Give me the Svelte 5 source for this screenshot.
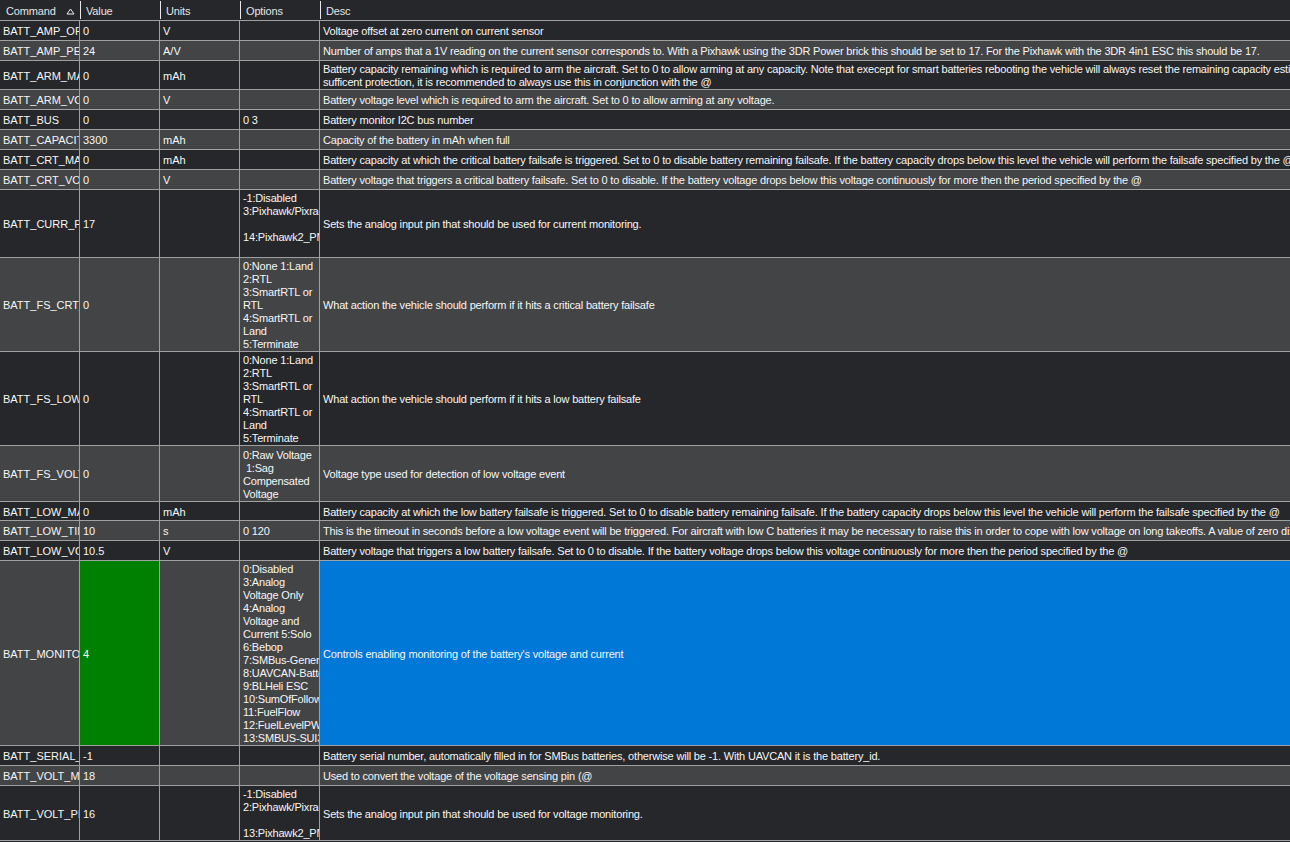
<script>
	const columns = ['Value', 'Units', 'Options', 'Desc'];

	const failsafe = ['0:None 1:Land', '2:RTL', '3:SmartRTL or', 'RTL', '4:SmartRTL or', 'Land', '5:Terminate'];

	const rows = [
		{ cmd: 'BATT_AMP_OFFSET', value: '0', units: 'V', desc: ['Voltage offset at zero current on current sensor'], h: 20 },
		{ cmd: 'BATT_AMP_PERVLT', value: '24', units: 'A/V', desc: ['Number of amps that a 1V reading on the current sensor corresponds to. With a Pixhawk using the 3DR Power brick this should be set to 17. For the Pixhawk with the 3DR 4in1 ESC this should be 17.'], h: 20 },
		{ cmd: 'BATT_ARM_MAH', value: '0', units: 'mAh', desc: ['Battery capacity remaining which is required to arm the aircraft. Set to 0 to allow arming at any capacity. Note that execept for smart batteries rebooting the vehicle will always reset the remaining capacity estimate, which can lead to this check not providing', 'sufficent protection, it is recommended to always use this in conjunction with the @'], h: 29 },
		{ cmd: 'BATT_ARM_VOLT', value: '0', units: 'V', desc: ['Battery voltage level which is required to arm the aircraft. Set to 0 to allow arming at any voltage.'], h: 20 },
		{ cmd: 'BATT_BUS', value: '0', options: ['0 3'], desc: ['Battery monitor I2C bus number'], h: 20 },
		{ cmd: 'BATT_CAPACITY', value: '3300', units: 'mAh', desc: ['Capacity of the battery in mAh when full'], h: 20 },
		{ cmd: 'BATT_CRT_MAH', value: '0', units: 'mAh', desc: ['Battery capacity at which the critical battery failsafe is triggered. Set to 0 to disable battery remaining failsafe. If the battery capacity drops below this level the vehicle will perform the failsafe specified by the @'], h: 20 },
		{ cmd: 'BATT_CRT_VOLT', value: '0', units: 'V', desc: ['Battery voltage that triggers a critical battery failsafe. Set to 0 to disable. If the battery voltage drops below this voltage continuously for more then the period specified by the @'], h: 20 },
		{ cmd: 'BATT_CURR_PIN', value: '17', options: ['-1:Disabled', '3:Pixhawk/Pixracer', '', '14:Pixhawk2_PM2', ''], desc: ['Sets the analog input pin that should be used for current monitoring.'], h: 68 },
		{ cmd: 'BATT_FS_CRT_ACT', value: '0', options: failsafe, desc: ['What action the vehicle should perform if it hits a critical battery failsafe'], h: 94 },
		{ cmd: 'BATT_FS_LOW_ACT', value: '0', options: failsafe, desc: ['What action the vehicle should perform if it hits a low battery failsafe'], h: 94 },
		{ cmd: 'BATT_FS_VOLTSRC', value: '0', options: ['0:Raw Voltage', '\u00a01:Sag', 'Compensated', 'Voltage'], desc: ['Voltage type used for detection of low voltage event'], h: 56 },
		{ cmd: 'BATT_LOW_MAH', value: '0', units: 'mAh', desc: ['Battery capacity at which the low battery failsafe is triggered. Set to 0 to disable battery remaining failsafe. If the battery capacity drops below this level the vehicle will perform the failsafe specified by the @'], h: 19 },
		{ cmd: 'BATT_LOW_TIMER', value: '10', units: 's', options: ['0 120'], desc: ['This is the timeout in seconds before a low voltage event will be triggered. For aircraft with low C batteries it may be necessary to raise this in order to cope with low voltage on long takeoffs. A value of zero disables low voltage errors.'], h: 20 },
		{ cmd: 'BATT_LOW_VOLT', value: '10.5', units: 'V', desc: ['Battery voltage that triggers a low battery failsafe. Set to 0 to disable. If the battery voltage drops below this voltage continuously for more then the period specified by the @'], h: 20 },
		{ cmd: 'BATT_MONITOR', value: '4', selected: true, options: ['0:Disabled', '3:Analog', 'Voltage Only', '4:Analog', 'Voltage and', 'Current 5:Solo', '6:Bebop', '7:SMBus-Generic', '8:UAVCAN-BatteryInfo', '9:BLHeli ESC', '10:SumOfFollowing', '11:FuelFlow', '12:FuelLevelPWM', '13:SMBUS-SUI3'], desc: ["Controls enabling monitoring of the battery's voltage and current"], h: 185 },
		{ cmd: 'BATT_SERIAL_NUM', value: '-1', desc: ['Battery serial number, automatically filled in for SMBus batteries, otherwise will be -1. With UAVCAN it is the battery_id.'], h: 20 },
		{ cmd: 'BATT_VOLT_MULT', value: '18', desc: ['Used to convert the voltage of the voltage sensing pin (@'], h: 20 },
		{ cmd: 'BATT_VOLT_PIN', value: '16', options: ['-1:Disabled', '2:Pixhawk/Pixracer', '', '13:Pixhawk2_PM2'], desc: ['Sets the analog input pin that should be used for voltage monitoring.'], h: 55 }
	];
</script>

<div class="grid">
	<div class="head">
		<div class="hcell first">
			<span>Command</span>
			<svg class="sort" width="9" height="7" viewBox="0 0 9 7"><path d="M4.5 1 L8 6 H1 Z" fill="none" stroke="#f0f0f0" /></svg>
		</div>
		{#each columns as col}
			<div class="hcell">{col}</div>
		{/each}
	</div>

	{#each rows as row, i}
		<div class="row" class:alt={i % 2 === 1} style="height: {row.h}px">
			<div class="cell cmd"><div class="line">{row.cmd}</div></div>
			<div class="cell" class:green={row.selected}><div class="line">{row.value}</div></div>
			<div class="cell"><div class="line">{row.units ?? ''}</div></div>
			<div class="cell tight">
				<div>
					{#each row.options ?? [] as line}
						<div class="line">{line}</div>
					{/each}
				</div>
			</div>
			<div class="cell tight" class:blue={row.selected}>
				<div>
					{#each row.desc as line}
						<div class="line">{line}</div>
					{/each}
				</div>
			</div>
		</div>
	{/each}
</div>

<style>
	:global(body) {
		margin: 0;
		background: #26272a;
		overflow: hidden;
	}

	.grid {
		width: 1290px;
		height: 842px;
		overflow: hidden;
		font-family: 'Liberation Sans', Arial, sans-serif;
		font-size: 11px;
		color: #f6f6f6;
		white-space: nowrap;
	}

	.head,
	.row {
		display: grid;
		box-sizing: border-box;
		border-bottom: 1px solid #a0a0a0;
		background: #26272a;
	}

	.head {
		grid-template-columns: 80px 80px 80px 80px 1fr;
		height: 21px;
		color: #e4e4e4;
		letter-spacing: -0.15px;
	}

	.row {
		grid-template-columns: 79px 80px 80px 80px 1fr;
	}

	.row.alt {
		background: #434446;
	}

	.hcell {
		display: flex;
		align-items: center;
		justify-content: space-between;
		padding: 2px 5px 0 6px;
		position: relative;
	}

	.hcell::after {
		content: '';
		position: absolute;
		left: 0;
		top: 1px;
		height: 18px;
		width: 1px;
		background: #e8e8e8;
	}

	.hcell.first::after {
		display: none;
	}

	.cell {
		display: flex;
		align-items: center;
		overflow: hidden;
		box-sizing: border-box;
		padding: 2px 0 0 3px;
		border-left: 1px solid #a0a0a0;
	}

	.cmd {
		border-left: 0;
	}

	.tight {
		letter-spacing: -0.18px;
	}

	.green {
		background: #008000;
	}

	.blue {
		background: #0078d7;
	}

	.line {
		height: 13px;
		line-height: 13px;
		padding-right: 2px;
		overflow: hidden;
	}
</style>
